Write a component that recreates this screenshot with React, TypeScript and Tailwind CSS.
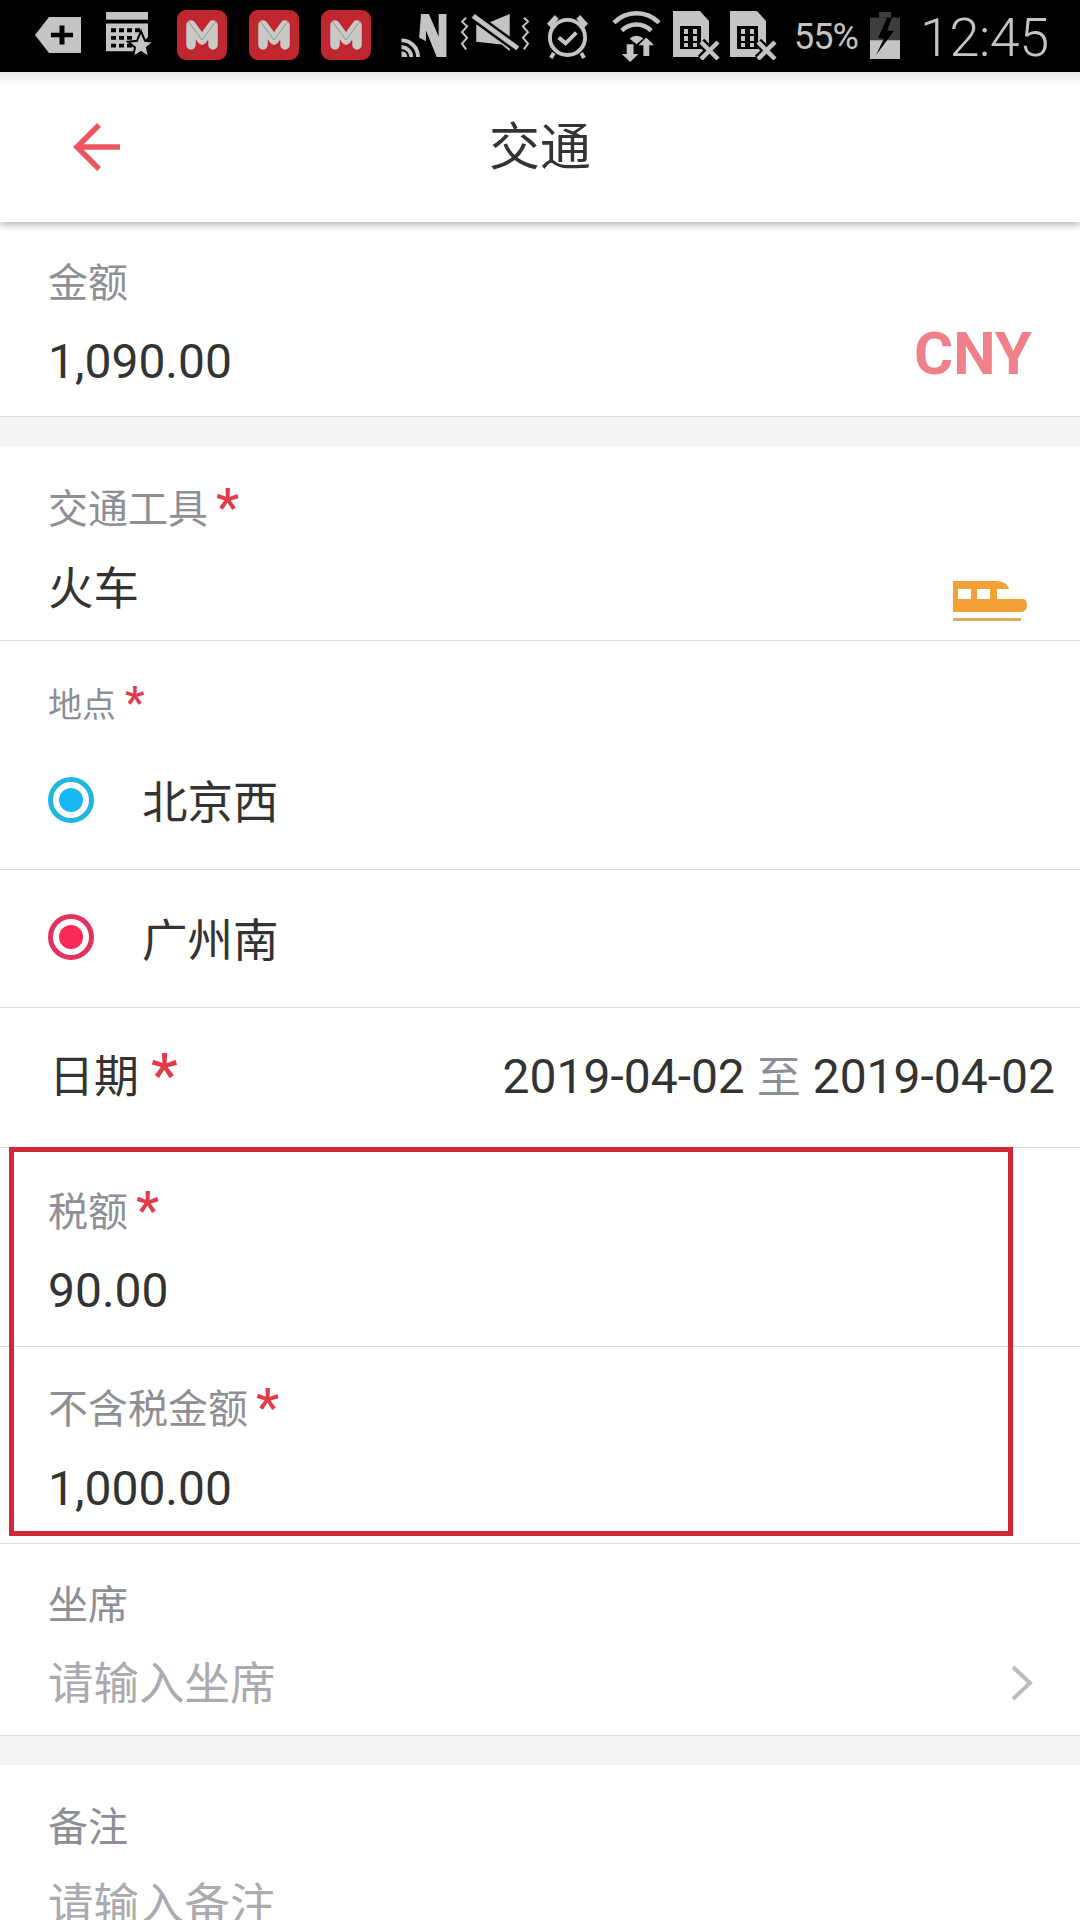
import React from "react";

const F = "font-['Roboto','Noto_Sans_CJK_SC',sans-serif]";

function Star({ className = "" }: { className?: string }) {
  return <span className={`text-[#e03c4a] leading-none font-medium font-['Roboto','Noto_Sans_CJK_SC',sans-serif] ${className}`}>*</span>;
}

function MailIcon() {
  return (
    <svg width="50" height="50" viewBox="0 0 50 50" className="shrink-0">
      <rect x="0" y="0" width="50" height="50" rx="9" fill="#c0262f" />
      <path d="M14 35 V15 L25 30 L36 15 V35" fill="none" stroke="#c9c9c5" strokeWidth="9.500" strokeLinecap="round" strokeLinejoin="round" />
      <path d="M11 11 L25 30 L39 11" fill="none" stroke="#8a8a88" strokeWidth="0.800" />
    </svg>
  );
}

function Sim() {
  return (
    <svg width="47" height="49" viewBox="0 0 47 49" className="shrink-0">
      <path d="M0 0H27L36 10V46H0Z" fill="#c4c5c2" />
      <rect x="7" y="15" width="21" height="23" fill="#000" />
      <path d="M11 18h4v5h-4zM20 18h4v5h-4zM11 25h4v5h-4zM20 25h4v5h-4zM11 32h4v4h-4zM20 32h4v4h-4z" fill="#c4c5c2" />
      <path d="M28 31 L45 48 M45 31 L28 48" stroke="#000" strokeWidth="9" />
      <path d="M28 31 L45 48 M45 31 L28 48" stroke="#c4c5c2" strokeWidth="4.500" />
    </svg>
  );
}

function StatusBar() {
  return (
    <div className="h-[72px] pb-[2px] bg-black flex items-center relative shrink-0 text-[#c4c5c2]">
      <svg width="46" height="36" viewBox="0 0 46 38" preserveAspectRatio="none" className="ml-[35px] shrink-0">
        <path d="M14 0H46V38H14L0 19Z" fill="#c4c5c2" />
        <path d="M27 9V29M16 19H38" stroke="#000" strokeWidth="5" />
      </svg>
      <svg width="50" height="46" viewBox="0 0 50 48" preserveAspectRatio="none" className="ml-[24px] shrink-0">
        <rect x="1" y="0" width="42" height="8" fill="#c4c5c2" />
        <path d="M1 12H43V26L30 41H1Z" fill="#c4c5c2" />
        <path d="M6 17h5v4H6zM14 17h5v4h-5zM22 17h5v4h-5zM30 17h5v4h-5zM6 25h5v4H6zM14 25h5v4h-5zM22 25h5v4h-5zM6 33h5v4H6zM14 33h5v4h-5zM22 33h5v4h-5z" fill="#000" />
        <path d="M36 20L40 30L49 31L42 37L44 47L36 42L28 47L30 37L23 31L32 30Z" fill="#c4c5c2" stroke="#000" strokeWidth="2" />
      </svg>
      <div className="ml-[22px] flex gap-[22px]"><MailIcon /><MailIcon /><MailIcon /></div>
      <svg width="46" height="43" viewBox="0 0 46 44" className="ml-[30px] shrink-0">
        <path d="M20 0H28L38 23V0H46V44H36L25 17V28L18 24Z" fill="#c4c5c2" />
        <path d="M0 44V38A6 6 0 0 1 6 44ZM0 32A12 12 0 0 1 12 44H8A8 8 0 0 0 0 36ZM0 25A19 19 0 0 1 19 44H15A15 15 0 0 0 0 29Z" fill="#c4c5c2" />
      </svg>
      <svg width="69" height="44" viewBox="0 0 68 46" preserveAspectRatio="none" className="ml-[14px] shrink-0">
        <path d="M5 5L1 9L6 14L1 20L6 26L1 32L5 38" fill="none" stroke="#c4c5c2" strokeWidth="2" />
        <path d="M62 5L66 9L61 14L66 20L61 26L66 32L62 38" fill="none" stroke="#c4c5c2" strokeWidth="2" />
        <path d="M15 12H23L48 1V40L40 33L15 30Z" fill="#c4c5c2" />
        <path d="M12 3L56 37" stroke="#000" strokeWidth="10" />
        <path d="M12 3L56 37" stroke="#c4c5c2" strokeWidth="5" />
      </svg>
      <svg width="45" height="47" viewBox="0 0 46 48" className="ml-[15px] shrink-0">
        <circle cx="23" cy="26" r="18" fill="none" stroke="#c4c5c2" strokeWidth="4" />
        <path d="M14 26L21 32L32 21" fill="none" stroke="#c4c5c2" strokeWidth="4" />
        <path d="M2 12L10 3L14 7L6 16ZM44 12L36 3L32 7L40 16Z" fill="#c4c5c2" />
        <path d="M9 42L6 47M37 42L40 47" stroke="#c4c5c2" strokeWidth="4" />
      </svg>
      <svg width="49" height="53" viewBox="0 0 50 54" className="ml-[22px] shrink-0">
        <path d="M2 14A32 32 0 0 1 48 14" fill="none" stroke="#c4c5c2" strokeWidth="4.500" />
        <path d="M10 22A21 21 0 0 1 40 22" fill="none" stroke="#c4c5c2" strokeWidth="4.500" />
        <path d="M18 30A10 10 0 0 1 32 30L25 36Z" fill="#c4c5c2" />
        <path d="M15 36H22V46H27L18.500 54L10 46H15Z" fill="#c4c5c2" />
        <path d="M32 48V37H27L35 29L43 37H38V48Z" fill="#c4c5c2" />
      </svg>
      <div className="ml-[12px] flex gap-[10px]"><Sim /><Sim /></div>
      <span className="ml-[17px] w-[66px] mt-[3px] text-[36px] leading-none tracking-[-1px] font-['Roboto',sans-serif]">55%</span>
      <svg width="30" height="47" viewBox="0 0 30 50" preserveAspectRatio="none" className="ml-[10px] shrink-0">
        <rect x="9" y="0" width="12" height="6" fill="#3e3e3e" />
        <rect x="0" y="6" width="30" height="24" fill="#3e3e3e" />
        <rect x="0" y="30" width="30" height="20" fill="#c4c5c2" />
        <path d="M17 6L8 28H14L6 46L24 20H17L22 6Z" fill="#000" />
      </svg>
      <span className="ml-[20px] mt-[5px] text-[54px] leading-none font-['Roboto',sans-serif] font-light tracking-[-0.5px]">12:45</span>
    </div>
  );
}

function Header() {
  return (
    <div className="h-[150px] bg-white relative flex items-center justify-center shrink-0 shadow-[0_2px_8px_rgba(0,0,0,0.35)] z-10 bg-gradient-to-b from-[#e8e8ea] via-white to-white bg-[length:100%_30px] bg-no-repeat">
      <svg width="50" height="48" viewBox="0 0 50 48" className="absolute left-[71px] top-[51px]" fill="none" stroke="#ec5560" strokeWidth="5.500">
        <path d="M49 24H6" />
        <path d="M28 2L6 24L28 46" />
      </svg>
      <span className={`text-[#333] text-[51px] leading-none ${F}`}>交通</span>
    </div>
  );
}

function Field({ label, value, star, right, border = true, placeholder, h, labelH, mt }: { label: string; value: string; star?: boolean; right?: React.ReactNode; border?: boolean; placeholder?: boolean; h: string; labelH: string; mt: string }) {
  const digits = /^[0-9.,]+$/.test(value);
  return (
    <div className={`${h} bg-white pl-[48px] flex flex-col relative shrink-0 ${border ? "border-b border-[#dcdcdc]" : ""}`}>
      <div className={`${labelH} flex items-end pb-[6px] shrink-0`}>
        <span className="text-[#8d8f95] text-[40px] leading-[48px]">{label}</span>
        {star && <Star className="ml-[8px] text-[52px]" />}
      </div>
      <div className={`${digits ? "text-[48px]" : "text-[45.5px]"} leading-[60px] ${mt} ${placeholder ? "text-[#aaaaaf]" : "text-[#333333]"}`}>{value}</div>
      {right}
    </div>
  );
}

export default function App() {
  return (
    <div className={`w-[1080px] h-[1920px] overflow-hidden bg-[#f5f5f7] flex flex-col relative ${F}`}>
      <StatusBar />
      <Header />
      <Field
        h="h-[195px]"
        labelH="h-[92px]"
        mt="mt-[18px]"
        label="金额"
        value="1,090.00"
        right={<span className="absolute right-[48px] top-[102px] text-[#f0818b] text-[60px] leading-none font-bold font-['Roboto',sans-serif]">CNY</span>}
      />
      <div className="h-[29px] shrink-0" />
      <Field
        h="h-[195px]"
        labelH="h-[94px]"
        mt="mt-[20px]"
        label="交通工具"
        value="火车"
        star
        right={
          <svg width="74" height="40" viewBox="0 0 74 40" className="absolute right-[53px] top-[135px]">
            <path d="M0 0H42C50 0 55 3 56 8H44V18H70C73 18 74 21 74 24C74 28 72 31 68 31H0Z" fill="#f3a037" />
            <rect x="5" y="8" width="13" height="10" fill="#fff" />
            <rect x="24" y="8" width="13" height="10" fill="#fff" />
            <rect x="0" y="37" width="68" height="3" fill="#e2ab5c" />
          </svg>
        }
      />
      <div className="h-[229px] bg-white border-b border-[#dcdcdc] pl-[48px] flex flex-col shrink-0">
        <div className="h-[86px] flex items-end shrink-0">
          <span className="text-[#8d8f95] text-[34px] leading-[44px]">地点</span>
          <Star className="ml-[9px] mb-[2px] text-[44px]" />
        </div>
        <div className="flex items-center mt-[38px]">
          <span className="w-[46px] h-[46px] rounded-full border-[5px] border-[#1fb7e0] flex items-center justify-center"><span className="w-[24px] h-[24px] rounded-full bg-[#17b9f5]" /></span>
          <span className="ml-[48px] mt-[9px] text-[45.5px] leading-[60px] text-[#333]">北京西</span>
        </div>
      </div>
      <div className="h-[138px] bg-white border-b border-[#dcdcdc] pl-[48px] flex items-center shrink-0">
        <span className="w-[46px] h-[46px] mb-[4px] rounded-full border-[5px] border-[#e2325f] flex items-center justify-center"><span className="w-[24px] h-[24px] rounded-full bg-[#fb2a54]" /></span>
        <span className="ml-[48px] mt-[6px] text-[45.5px] leading-[60px] text-[#333]">广州南</span>
      </div>
      <div className="h-[140px] bg-white border-b border-[#dcdcdc] pl-[49px] pr-[25px] flex items-center justify-between shrink-0">
        <div className="flex items-center">
          <span className="text-[45px] text-[#333] leading-[60px]">日期</span>
          <Star className="ml-[12px] text-[60px] mb-[6px]" />
        </div>
        <div className="text-[48px] text-[#333] leading-[60px]">2019-04-02 <span className="text-[#8d8f95] text-[44px]">至</span> 2019-04-02</div>
      </div>
      <Field h="h-[199px]" labelH="h-[95px]" mt="mt-[18px]" label="税额" value="90.00" star />
      <Field h="h-[197px]" labelH="h-[93px]" mt="mt-[19px]" label="不含税金额" value="1,000.00" star />
      <Field
        h="h-[192px]"
        labelH="h-[92px]"
        mt="mt-[19px]"
        label="坐席"
        value="请输入坐席"
        placeholder
        right={
          <svg width="22" height="36" viewBox="0 0 22 36" className="absolute right-[47px] top-[121px]" fill="none" stroke="#bcbcbf" strokeWidth="4">
            <path d="M2 2L19 18L2 34" />
          </svg>
        }
      />
      <div className="h-[29px] shrink-0" />
      <Field h="h-[190px]" labelH="h-[93px]" mt="mt-[18px]" label="备注" value="请输入备注" placeholder border={false} />
      <div className="absolute left-[9px] top-[1147px] w-[1004px] h-[389px] border-[5px] border-[#d12838]" />
    </div>
  );
}
